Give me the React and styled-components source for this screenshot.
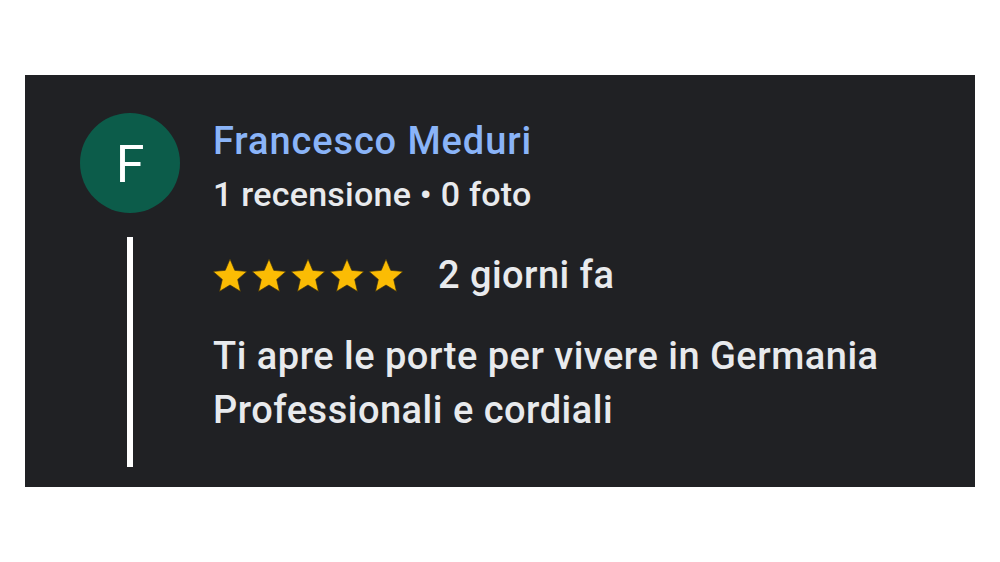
import React from "react";
import styled, { createGlobalStyle } from "styled-components";

const Global = createGlobalStyle`
  body {
    margin: 0;
    background: #ffffff;
    font-family: Roboto, "Noto Sans", sans-serif;
  }
`;

const Page = styled.div`
  padding: 75px 25px 0;
`;

const Card = styled.div`
  display: flex;
  width: 950px;
  height: 412px;
  box-sizing: border-box;
  background: #202124;
  padding: 38px 0 20px 55px;
`;

const Side = styled.div`
  display: flex;
  flex-direction: column;
  align-items: center;
  width: 100px;
  flex-shrink: 0;
`;

const Avatar = styled.div`
  width: 100px;
  height: 100px;
  box-sizing: border-box;
  padding-top: 4px;
  border-radius: 50%;
  background: #0c5c4a;
  color: #ffffff;
  display: flex;
  align-items: center;
  justify-content: center;
  font-size: 52px;
  line-height: 1;
`;

const Thread = styled.div`
  margin-top: 24px;
  width: 6px;
  flex: 1;
  background: #ffffff;
`;

const Body = styled.div`
  margin-left: 33px;
  display: flex;
  flex-direction: column;
  font-weight: 500;
`;

const Name = styled.div`
  color: #8ab4f8;
  font-size: 38px;
  line-height: 44px;
  letter-spacing: 0.9px;
  margin-top: 6px;
`;

const Meta = styled.div`
  color: #e8eaed;
  font-size: 34px;
  line-height: 44px;
  letter-spacing: 0.25px;
  margin-top: 9px;
`;

const RatingRow = styled.div`
  display: flex;
  align-items: center;
  gap: 35px;
  margin-top: 37px;
  color: #e8eaed;
  font-size: 38px;
  line-height: 44px;
  letter-spacing: 0.45px;
`;

const Stars = styled.div`
  display: flex;
  gap: 5px;
`;

const Text = styled.div`
  color: #e8eaed;
  font-size: 38px;
  line-height: 54px;
  letter-spacing: 0.5px;
  margin-top: 32px;
`;

const Star = () => (
  <svg width="34" height="33" viewBox="2 2 20 19.3">
    <path
      fill="#fbbc04"
      stroke="#3a2f10"
      strokeWidth="0.4"
      d="M12 17.27L18.18 21l-1.64-7.03L22 9.24l-7.19-.61L12 2 9.19 8.63 2 9.24l5.46 4.73L5.82 21z"
    />
  </svg>
);

export default function App() {
  return (
    <>
      <Global />
      <Page>
        <Card>
          <Side>
            <Avatar>F</Avatar>
            <Thread />
          </Side>
          <Body>
            <Name>Francesco Meduri</Name>
            <Meta>1 recensione • 0 foto</Meta>
            <RatingRow>
              <Stars>
                {[0, 1, 2, 3, 4].map((i) => (
                  <Star key={i} />
                ))}
              </Stars>
              <span>2 giorni fa</span>
            </RatingRow>
            <Text>
              Ti apre le porte per vivere in Germania
              <br />
              Professionali e cordiali
            </Text>
          </Body>
        </Card>
      </Page>
    </>
  );
}
